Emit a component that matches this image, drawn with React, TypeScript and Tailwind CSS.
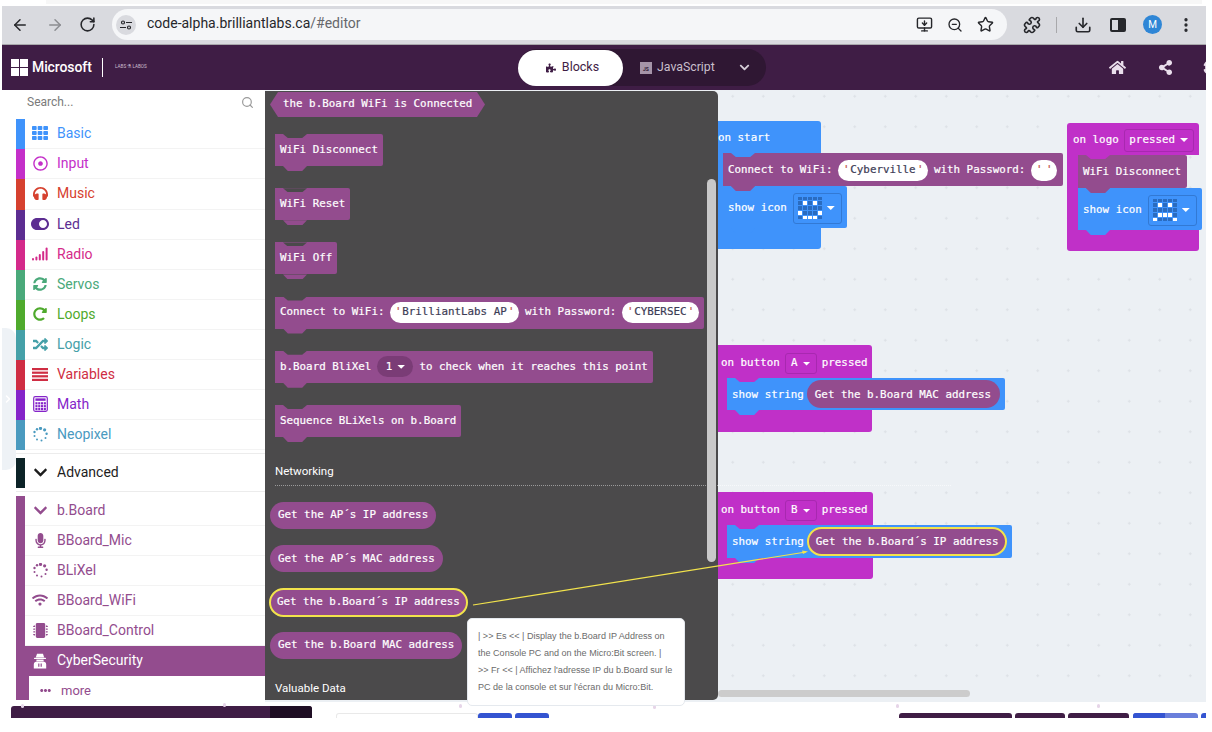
import { ReactNode } from "react";
import { ArrowLeft, ArrowRight, ChevronRight, RotateCw, MonitorDown, ZoomOut, Star, Puzzle, Download, MoreVertical, Search } from "lucide-react";
import {
  FaChevronDown, FaCog, FaEllipsisH, FaHeadphones, FaHome, FaMicrochip, FaMicrophone, FaPuzzlePiece,
  FaRandom, FaRedoAlt, FaRegDotCircle, FaShareAlt, FaSyncAlt, FaTh, FaToggleOn, FaWifi,
} from "react-icons/fa";

const MONO = "font-['DejaVu_Sans_Mono',monospace] text-[10.85px] text-white whitespace-pre [-webkit-text-stroke:0.2px_white]";

function SignalIcon() {
  return (
    <svg width="16" height="14" viewBox="0 0 16 14" fill="currentColor">
      <rect x="0" y="11" width="2" height="2.5" rx="1" />
      <rect x="3.4" y="9.5" width="2" height="4" rx="1" />
      <rect x="6.8" y="7" width="2" height="6.5" rx="1" />
      <rect x="10.2" y="4" width="2" height="9.5" rx="1" />
      <rect x="13.6" y="0.5" width="2" height="13" rx="1" />
    </svg>
  );
}

function LinesIcon() {
  return (
    <svg width="16" height="13" viewBox="0 0 16 13" fill="currentColor">
      <rect y="0" width="16" height="2.2" />
      <rect y="3.6" width="16" height="2.2" />
      <rect y="7.2" width="16" height="2.2" />
      <rect y="10.8" width="16" height="2.2" />
    </svg>
  );
}

function RingIcon() {
  const dots = [
    [7.5, 1.4, 1.6], [11.6, 2.8, 1.6], [13.6, 6.8, 1.2], [12.5, 11, 1], [8.5, 13.6, 1],
    [4, 12.5, 1], [1.5, 9, 1], [1.5, 5, 1.2], [4, 2.2, 1.2],
  ];
  return (
    <svg width="15" height="15" viewBox="0 0 15 15" fill="currentColor">
      {dots.map(([x, y, r], i) => (
        <circle key={i} cx={x} cy={y} r={r} />
      ))}
    </svg>
  );
}

function CalcIcon() {
  const cells = [];
  for (let r = 0; r < 3; r++) {
    for (let c = 0; c < 4; c++) {
      cells.push(<rect key={`${r}-${c}`} x={2.4 + c * 2.8} y={6.2 + r * 2.9} width="2.1" height="2.2" />);
    }
  }
  return (
    <svg width="15" height="16" viewBox="0 0 15 16" fill="currentColor">
      <rect x="0.7" y="0.7" width="13.6" height="14.6" rx="1.5" fill="none" stroke="currentColor" strokeWidth="1.2" />
      <rect x="2.4" y="2.4" width="10.2" height="2.4" />
      {cells}
    </svg>
  );
}

function HoodIcon() {
  return (
    <svg width="14" height="16" viewBox="0 0 14 16" fill="currentColor">
      <path d="M4 .8h6l1.2 3.7H2.8z" />
      <rect x="1" y="4.8" width="12" height="1.3" rx=".6" />
      <path d="M3.4 6.6h7.2v1.6H3.4z" />
      <path fillRule="evenodd" d="M.8 15.6v-4.2C.8 9.4 2.4 8.6 4 8.6h6c1.6 0 3.2.8 3.2 2.8v4.2zM5.2 10.4v3.4h1.2v-3.4zM7.6 10.4v3.4h1.2v-3.4z" />
    </svg>
  );
}

const MAIN_ROWS = [
  { label: "Basic", color: "#3f93fb", icon: <FaTh size={16} /> },
  { label: "Input", color: "#c42fc9", icon: <FaRegDotCircle size={15} /> },
  { label: "Music", color: "#d6412f", icon: <FaHeadphones size={15} />, tall: true },
  { label: "Led", color: "#5c2d91", icon: <FaToggleOn size={18} /> },
  { label: "Radio", color: "#d42a8a", icon: <SignalIcon /> },
  { label: "Servos", color: "#4aa97a", icon: <FaSyncAlt size={14} /> },
  { label: "Loops", color: "#4faa2d", icon: <FaRedoAlt size={14} /> },
  { label: "Logic", color: "#45a0a8", icon: <FaRandom size={15} /> },
  { label: "Variables", color: "#cf2d43", icon: <LinesIcon /> },
  { label: "Math", color: "#8524c9", icon: <CalcIcon /> },
  { label: "Neopixel", color: "#4a9abf", icon: <RingIcon /> },
];

const EXT_ROWS = [
  { label: "b.Board", icon: <FaChevronDown size={15} /> },
  { label: "BBoard_Mic", icon: <FaMicrophone size={15} /> },
  { label: "BLiXel", icon: <RingIcon /> },
  { label: "BBoard_WiFi", icon: <FaWifi size={16} /> },
  { label: "BBoard_Control", icon: <FaMicrochip size={15} /> },
];

function SideRow({ label, color, icon, tall }: { label: string; color: string; icon: ReactNode; tall?: boolean }) {
  return (
    <div
      className={`flex items-center border-b border-[#f3f3f3] pl-[5px] ${tall ? "h-[31px]" : "h-[30px]"}`}
      style={{ color }}
    >
      <span className="flex w-[20px] justify-center">{icon}</span>
      <span className="ml-[7px] text-[14px]">{label}</span>
    </div>
  );
}

function Sidebar() {
  return (
    <div className="mb-[2px] flex w-[249px] shrink-0 flex-col bg-white pt-px">
      <div className="flex h-[28px] items-center justify-between pb-[5px] pl-[11px] pr-[11px] text-[12px] text-[#7a7a7a]">
        <span>Search...</span>
        <Search size={13} strokeWidth={2.2} className="text-[#9a9a9a]" />
      </div>
      {MAIN_ROWS.map((r) => (
        <div key={r.label} className="flex">
          <div className="w-[9px]" style={{ background: r.color }} />
          <div className="flex-1">
            <SideRow {...r} />
          </div>
        </div>
      ))}
      <div className="mt-[3px] h-px bg-[#ececec]" />
      <div className="mt-[4px] flex h-[30px]">
        <div className="w-[9px] bg-[#0c2327]" />
        <div className="flex flex-1 items-center pl-[5px] text-[#1d1d1d]">
          <span className="flex w-[20px] justify-center">
            <FaChevronDown size={15} />
          </span>
          <span className="ml-[7px] text-[14px]">Advanced</span>
        </div>
      </div>
      <div className="mt-[3px] h-px bg-[#ececec]" />
      <div className="mt-[4px] flex flex-1">
        <div className="w-[9px] bg-[#934c8e]" />
        <div className="flex flex-1 flex-col">
          {EXT_ROWS.map((r) => (
            <SideRow key={r.label} {...r} color="#934c8e" />
          ))}
          <div className="flex h-[30px] items-center bg-[#934c8e] pl-[5px] text-white">
            <span className="flex w-[20px] justify-center">
              <HoodIcon />
            </span>
            <span className="ml-[7px] text-[14px]">CyberSecurity</span>
          </div>
          <div className="flex flex-1 items-center text-[#934c8e]">
            <div className="h-full w-[4px] bg-[#934c8e]" />
            <span className="ml-[9px] mt-[5px] flex w-[14px] justify-center">
              <FaEllipsisH size={11} />
            </span>
            <span className="ml-[9px] mt-[5px] text-[13px]">more</span>
          </div>
        </div>
      </div>
    </div>
  );
}

function StringField({ value, w, last }: { value: string; w: number; last?: boolean }) {
  return (
    <span
      className={`ml-[5.5px] flex h-[21px] shrink-0 items-center justify-between rounded-full bg-white px-[5px] font-['DejaVu_Sans_Mono',monospace] text-[10.85px] text-[#3c3c55] [-webkit-text-stroke:0.2px_#3c3c55] ${
        last ? "" : "mr-[6px]"
      }`}
      style={{ width: w }}
    >
      <span className="w-[6px] text-center text-[#c0564a] [-webkit-text-stroke:0.2px_#c0564a]">'</span>
      {value}
      <span className="w-[6px] text-center text-[#c0564a] [-webkit-text-stroke:0.2px_#c0564a]">'</span>
    </span>
  );
}

function Block({
  children,
  color = "#934c8e",
  notch = "#4b4a4b",
  h = 32,
  w,
  shift,
}: {
  children: ReactNode;
  color?: string;
  notch?: string;
  h?: number;
  w?: number;
  shift?: boolean;
}) {
  return (
    <div
      className={`relative flex items-center rounded-r-[2px] pl-[5px] pr-[5px] ${MONO} ${w ? "" : "w-fit"} ${shift ? "pt-[2px]" : ""}`}
      style={{ background: color, height: h, width: w }}
    >
      <div
        className="absolute left-[8px] top-0 z-[5] h-[4px] w-[24px] [clip-path:polygon(0_0,100%_0,80%_100%,20%_100%)]"
        style={{ background: notch }}
      />
      {children}
      <div
        className="absolute left-[8px] top-full z-10 h-[5px] w-[24px] [clip-path:polygon(0_0,100%_0,80%_100%,20%_100%)]"
        style={{ background: color }}
      />
    </div>
  );
}

function Pill({ text, active }: { text: string; active?: boolean }) {
  return (
    <div
      className={`flex w-fit items-center rounded-full bg-[#934c8e] ${MONO} ${
        active ? "h-[29px] border-2 border-[#f2e34c] px-[6px]" : "h-[27px] px-[8px]"
      }`}
    >
      {text}
    </div>
  );
}

function Caret() {
  return <span className="ml-[5px] h-[4px] w-[8px] bg-white [clip-path:polygon(0_0,100%_0,50%_100%)]" />;
}

function LedPicker({ on }: { on: number[] }) {
  return (
    <div className="ml-[6px] flex h-[31px] w-[49px] items-center rounded-[3px] border border-[#3279d4] pl-[4px]">
      <div className="grid w-[24px] grid-cols-5 gap-px">
        {Array.from({ length: 25 }, (_, i) => (
          <div key={i} className={`h-[3.8px] ${on.includes(i) ? "bg-white" : "bg-[#2a6cc0]"}`} />
        ))}
      </div>
      <Caret />
    </div>
  );
}

function Flyout() {
  return (
    <div className="relative z-20 mt-px flex h-[609px] w-[453px] flex-col overflow-hidden rounded-r-[5px] bg-[#4b4a4b] pl-[10px] pt-px">
      <div className={`-ml-[5px] flex h-[25px] w-[215px] shrink-0 items-center bg-[#934c8e] pl-[13px] [clip-path:polygon(0_50%,8px_0,calc(100%-8px)_0,100%_50%,calc(100%-8px)_100%,8px_100%)] ${MONO}`}>
        the b.Board WiFi is Connected
      </div>
      <div className="mt-[17px] flex flex-col gap-[22.2px]">
        <Block>WiFi Disconnect</Block>
        <Block>WiFi Reset</Block>
        <Block>WiFi Off</Block>
        <Block>
          Connect to WiFi:
          <StringField value="BrilliantLabs AP" w={129} />
          with Password:
          <StringField value="CYBERSEC" w={77} last />
        </Block>
        <Block>
          b.Board BliXel
          <span className="mx-[6px] flex h-[21px] w-[36px] items-center justify-center rounded-full bg-[#7a3c76]">
            1<Caret />
          </span>
          to check when it reaches this point
        </Block>
        <Block>Sequence BLiXels on b.Board</Block>
      </div>
      <div className="mt-[27px] font-['Roboto',sans-serif] text-[11.5px] leading-[14px] text-white">Networking</div>
      <div className="mt-[7px] border-t border-dotted border-[#9a9a9a]" />
      <div className="-ml-[5px] mt-[16px] flex flex-col gap-[16.3px]">
        <Pill text="Get the AP´s IP address" />
        <Pill text="Get the AP´s MAC address" />
        <div className="-my-px -ml-px">
          <Pill text="Get the b.Board´s IP address" active />
        </div>
        <Pill text="Get the b.Board MAC address" />
      </div>
      <div className="mt-[22px] font-['Roboto',sans-serif] text-[11.5px] leading-[14px] text-white">Valuable Data</div>
      <div className="absolute left-[442px] top-[88px] h-[383px] w-[9px] rounded-full bg-[#c9c9c9]" />
    </div>
  );
}

const BLUE = "#3f93fb";
const MAGENTA = "#c030c8";

function Canvas() {
  return (
    <>
      <div className="absolute left-[435px] top-[31px] w-[121px]">
        <div className={`flex h-[32px] items-center rounded-t-[3px] pl-[18px] pt-[2px] ${MONO}`} style={{ background: BLUE }}>
          on start
        </div>
        <div className="flex">
          <div className="w-[23px] shrink-0" style={{ background: BLUE }} />
          <div>
            <Block w={340} h={33} notch={BLUE} shift>
              Connect to WiFi:
              <StringField value="Cyberville" w={90} />
              with Password:
              <StringField value="" w={26} last />
            </Block>
            <Block w={124} h={42} color={BLUE} notch="#934c8e" shift>
              show icon
              <LedPicker on={[6, 8, 15, 19, 21, 22, 23]} />
            </Block>
          </div>
        </div>
        <div className="h-[21px] rounded-b-[3px]" style={{ background: BLUE }} />
      </div>

      <div className="absolute left-[802px] top-[33px] w-[132px]">
        <div className={`flex h-[32px] items-center rounded-t-[3px] pl-[6px] pt-[2px] ${MONO}`} style={{ background: MAGENTA }}>
          on logo
          <span className="ml-[5px] flex h-[23px] w-[70px] items-center justify-center rounded-[3px] border border-[#a828b0]">
            pressed
            <Caret />
          </span>
        </div>
        <div className="flex">
          <div className="w-[11px] shrink-0" style={{ background: MAGENTA }} />
          <div>
            <Block w={109} h={33} notch={MAGENTA} shift>WiFi Disconnect</Block>
            <Block w={124} h={42} color={BLUE} notch="#934c8e" shift>
              show icon
              <LedPicker on={[6, 8, 16, 17, 18, 20, 24]} />
            </Block>
          </div>
        </div>
        <div className="h-[21px] rounded-b-[3px]" style={{ background: MAGENTA }} />
      </div>

      <div className="absolute left-[435px] top-[255px] w-[172px]">
        <div className={`flex h-[33px] items-center rounded-t-[3px] pl-[21px] pt-[4px] ${MONO}`} style={{ background: MAGENTA }}>
          on button
          <span className="mx-[5px] flex h-[21px] w-[32px] items-center justify-center rounded-[3px] border border-[#a828b0]">
            A<Caret />
          </span>
          pressed
        </div>
        <div className="flex">
          <div className="w-[27px] shrink-0" style={{ background: MAGENTA }} />
          <Block w={278} color={BLUE} notch={MAGENTA}>
            <span className="pt-[2px]">show string</span>
            <span className={`ml-[3px] flex h-[28px] w-[193px] items-center rounded-full bg-[#934c8e] pl-[8px] pt-[2px] ${MONO}`}>
              Get the b.Board MAC address
            </span>
          </Block>
        </div>
        <div className="h-[22px] rounded-b-[3px]" style={{ background: MAGENTA }} />
      </div>

      <div className="absolute left-[435px] top-[402px] w-[173px]">
        <div className={`flex h-[33px] items-center rounded-t-[3px] pl-[21px] pt-[4px] ${MONO}`} style={{ background: MAGENTA }}>
          on button
          <span className="mx-[5px] flex h-[21px] w-[32px] items-center justify-center rounded-[3px] border border-[#a828b0]">
            B<Caret />
          </span>
          pressed
        </div>
        <div className="flex">
          <div className="w-[27px] shrink-0" style={{ background: MAGENTA }} />
          <Block w={285} h={33} color={BLUE} notch={MAGENTA}>
            <span className="pt-[2px]">show string</span>
            <span className={`ml-[3px] flex h-[29px] w-[200px] items-center rounded-full border-2 border-[#f2e34c] bg-[#934c8e] pl-[7px] pt-[2px] ${MONO}`}>
              Get the b.Board´s IP address
            </span>
          </Block>
        </div>
        <div className="h-[21px] rounded-b-[3px]" style={{ background: MAGENTA }} />
      </div>

      <div className="absolute left-[453px] top-[395px] w-[233px] border-t border-dotted border-white/60" />
      <div className="absolute bottom-[5px] left-[453px] h-[7px] w-[252px] rounded-full bg-[#cccccc]" />
    </>
  );
}

function Tooltip() {
  return (
    <div className="absolute left-[202px] top-[528px] z-30 h-[88px] w-[218px] rounded-[5px] border border-[#e5e9ee] bg-white pl-[10px] pt-[9px] font-['Liberation_Sans',sans-serif] text-[9.05px] leading-[17px] text-[#6b6b6b]">
      <div>| &gt;&gt; Es &lt;&lt; | Display the b.Board IP Address on</div>
      <div>the Console PC and on the Micro:Bit screen. |</div>
      <div>&gt;&gt; Fr &lt;&lt; | Affichez l'adresse IP du b.Board sur le</div>
      <div>PC de la console et sur l'écran du Micro:Bit.</div>
    </div>
  );
}

function ChromeBar() {
  return (
    <div className="flex h-[39px] items-center border-b border-[#a8a8ab] bg-[#d9dadf] pb-px text-[#26272b]">
      <ArrowLeft size={18} className="ml-[9px]" />
      <ArrowRight size={18} className="ml-[17px] text-[#8c8d91]" />
      <RotateCw size={17} strokeWidth={2.2} className="ml-[15px]" />
      <div className="ml-[16px] flex h-[31px] w-[895px] items-center rounded-full bg-[#f5f6f8] pl-[4px] pr-[13px]">
        <span className="flex h-[20px] w-[20px] items-center justify-center rounded-full bg-[#d9dadf]">
          <svg width="12" height="10" viewBox="0 0 12 10" fill="none" stroke="currentColor" strokeWidth="1.2">
            <circle cx="3" cy="2.5" r="1.5" />
            <path d="M6 2.5h6M0 7.5h6" />
            <circle cx="9" cy="7.5" r="1.5" />
          </svg>
        </span>
        <span className="-mt-[2px] ml-[11px] flex-1 text-[14px]">
          code-alpha.brilliantlabs.ca<span className="text-[#66676b]">/#editor</span>
        </span>
        <MonitorDown size={17} />
        <ZoomOut size={16} className="ml-[14px]" />
        <Star size={17} className="ml-[14px]" />
      </div>
      <Puzzle size={18} strokeWidth={2.2} className="ml-[16px]" />
      <div className="ml-[15px] h-[16px] w-px bg-[#a8a8ab]" />
      <Download size={18} strokeWidth={2.2} className="ml-[17px]" />
      <div className="ml-[18px] flex h-[14px] w-[16px] rounded-[2px] border-2 border-[#26272b]">
        <div className="ml-auto w-[6px] bg-[#26272b]" />
      </div>
      <div className="ml-[17px] flex h-[19px] w-[19px] items-center justify-center rounded-full bg-[#2f86d6] text-[10px] text-white">M</div>
      <MoreVertical size={18} strokeWidth={2.4} className="ml-[15px]" />
    </div>
  );
}

function Header() {
  return (
    <div className="flex h-[45px] items-center bg-[#3f1d45] text-white">
      <div className="ml-[9px] grid h-[17px] w-[17px] shrink-0 grid-cols-2 gap-px">
        <div className="bg-white" />
        <div className="bg-white" />
        <div className="bg-white" />
        <div className="bg-white" />
      </div>
      <span className="ml-[4px] w-[59px] shrink-0 text-[14px] font-medium tracking-[-0.1px]">Microsoft</span>
      <div className="ml-[11px] h-[19px] w-px shrink-0 bg-white" />
      <span className="ml-[12px] w-[33px] shrink-0 whitespace-nowrap text-[4.6px] text-[#cdbfd0]">LABS ⚗ LABOS</span>
      <div className="ml-[370px] flex h-[37px] w-[248px] shrink-0 items-center rounded-full bg-[#2f1733]">
        <div className="flex h-[36px] w-[105px] shrink-0 items-center justify-center rounded-full bg-white pl-[4px] text-[12.5px] text-[#3f1d45]">
          <FaPuzzlePiece size={10} className="mr-[6px]" />
          Blocks
        </div>
        <span className="ml-[17px] flex h-[12px] w-[12px] items-end justify-center bg-[#a594a8] text-[5px] font-bold text-[#2f1733]">JS</span>
        <span className="ml-[5px] text-[12.3px] text-[#c9bfcc]">JavaScript</span>
        <FaChevronDown size={11} className="ml-[24px] text-[#d6ced8]" />
      </div>
      <FaHome size={17} className="ml-[343px] shrink-0 text-[#eadfec]" />
      <FaShareAlt size={15} className="ml-[32px] shrink-0 text-[#eadfec]" />
      <FaCog size={17} className="ml-[30px] shrink-0 text-[#eadfec]" />
    </div>
  );
}

function Splash({ className }: { className: string }) {
  return <div className={`absolute h-[4px] w-[3px] rounded-full bg-[#e6d5e8] ${className}`} />;
}

function BottomBar() {
  return (
    <div className="relative flex h-[16px] items-end">
      <div className="ml-[9px] flex h-[12px] w-[301px] overflow-hidden rounded-t-[3px] bg-[#3f1d45]">
        <div className="ml-auto w-[42px] bg-[#1f0e24]" />
      </div>
      <div className="ml-[24px] h-[5px] w-[142px] rounded-t-[3px] border border-b-0 border-[#e9e9e9]" />
      <div className="h-[5px] w-[34px] rounded-t-[3px] bg-[#3454d1]" />
      <div className="ml-[3px] h-[5px] w-[34px] rounded-t-[3px] bg-[#3454d1]" />
      <div className="ml-[350px] h-[5px] w-[113px] rounded-t-[3px] bg-[#3f1d45]" />
      <div className="ml-[3px] h-[5px] w-[50px] rounded-t-[3px] bg-[#3f1d45]" />
      <div className="ml-[3px] h-[5px] w-[61px] rounded-t-[3px] bg-[#3f1d45]" />
      <div className="ml-[4px] flex h-[5px] w-[65px] overflow-hidden rounded-t-[3px] bg-[#6a7fdb]">
        <div className="w-[32px] bg-[#3454d1]" />
      </div>
      <div className="ml-[3px] h-[5px] w-[5px] rounded-tl-[3px] bg-[#3454d1]" />
      <Splash className="left-[19px] top-[2px]" />
      <Splash className="left-[221px] top-[1px]" />
      <Splash className="left-[457px] top-[2px]" />
      <Splash className="left-[651px] top-[3px]" />
      <Splash className="left-[894px] top-[2px]" />
      <Splash className="left-[1095px] top-[2px]" />
    </div>
  );
}

export default function App() {
  return (
    <div className="h-[732px] w-[1212px] overflow-hidden bg-white font-['Roboto',sans-serif]">
      <div className="ml-[46px] h-[4px] w-[1156px] bg-[#f7f7f7]" />
      <div className="ml-[2px] mt-[2px] w-[1204px] overflow-hidden">
        <ChromeBar />
        <Header />
        <div className="flex h-[612px]">
          <div className="w-[14px] shrink-0 bg-white pt-[238px]">
            <div className="flex h-[142px] items-center rounded-r-[10px] bg-[#eef2f6] text-white">
              <ChevronRight size={12} strokeWidth={3} />
            </div>
          </div>
          <Sidebar />
          <div className="relative flex-1 bg-[#ecf0f4] bg-[radial-gradient(circle,#dde1e6_1px,transparent_1px)] bg-[size:30.5px_30.5px] bg-[position:-5px_-9px]">
            <Canvas />
            <Flyout />
            <Tooltip />
          </div>
        </div>
        <BottomBar />
      </div>
      <svg className="pointer-events-none absolute left-0 top-0 z-40" width="1212" height="732">
        <line x1="473" y1="605" x2="806" y2="552" stroke="#f2e34c" strokeWidth="1.2" />
        <path d="M808 551.5l-6-1 1 3.4z" fill="#f2e34c" />
      </svg>
    </div>
  );
}
